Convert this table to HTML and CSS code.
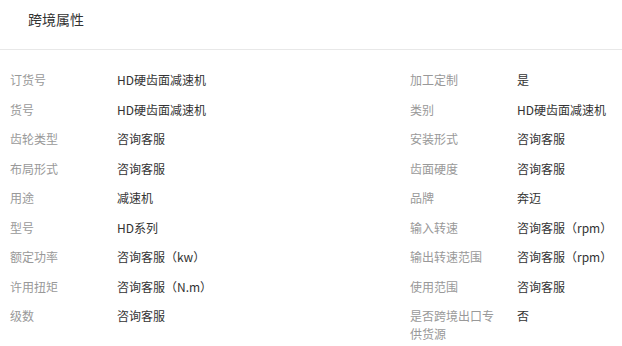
FILE: index.html
```html
<!DOCTYPE html>
<html lang="zh-CN">
<head>
<meta charset="utf-8">
<title>跨境属性</title>
<link rel="stylesheet" href="styles.css">
</head>
<body>
<div class="panel">
  <div class="panel-head"><span class="panel-title">跨境属性</span></div>
  <div class="attrs">
    <div class="attr"><span class="label">订货号</span><span class="value">HD硬齿面减速机</span></div>
    <div class="attr"><span class="label">加工定制</span><span class="value">是</span></div>
    <div class="attr"><span class="label">货号</span><span class="value">HD硬齿面减速机</span></div>
    <div class="attr"><span class="label">类别</span><span class="value">HD硬齿面减速机</span></div>
    <div class="attr"><span class="label">齿轮类型</span><span class="value">咨询客服</span></div>
    <div class="attr"><span class="label">安装形式</span><span class="value">咨询客服</span></div>
    <div class="attr"><span class="label">布局形式</span><span class="value">咨询客服</span></div>
    <div class="attr"><span class="label">齿面硬度</span><span class="value">咨询客服</span></div>
    <div class="attr"><span class="label">用途</span><span class="value">减速机</span></div>
    <div class="attr"><span class="label">品牌</span><span class="value">奔迈</span></div>
    <div class="attr"><span class="label">型号</span><span class="value">HD系列</span></div>
    <div class="attr"><span class="label">输入转速</span><span class="value">咨询客服（rpm）</span></div>
    <div class="attr"><span class="label">额定功率</span><span class="value">咨询客服（kw）</span></div>
    <div class="attr"><span class="label">输出转速范围</span><span class="value">咨询客服（rpm）</span></div>
    <div class="attr"><span class="label">许用扭矩</span><span class="value">咨询客服（N.m）</span></div>
    <div class="attr"><span class="label">使用范围</span><span class="value">咨询客服</span></div>
    <div class="attr"><span class="label">级数</span><span class="value">咨询客服</span></div>
    <div class="attr"><span class="label">是否跨境出口专供货源</span><span class="value">否</span></div>
  </div>
</div>
</body>
</html>
```
FILE: styles.css
```css
html, body {
  margin: 0;
  padding: 0;
  background: #fff;
}
body {
  font-family: "Microsoft YaHei", "Noto Sans CJK SC", sans-serif;
  font-size: 12px;
  color: #333;
}
.panel-head {
  height: 39px;
  padding: 10px 0 0 28px;
  border-bottom: 1px solid #e8e8e8;
}
.panel-title {
  font-size: 14px;
  line-height: 18px;
  color: #333;
}
.attrs {
  display: grid;
  grid-template-columns: 400px minmax(0, 1fr);
  row-gap: 11.5px;
  padding: 21px 0 0 10px;
}
.attr {
  display: flex;
  line-height: 18px;
  min-width: 0;
}
.label {
  width: 95px;
  flex: none;
  padding-right: 12px;
  color: #999;
}
.value {
  color: #333;
  white-space: nowrap;
}
```
